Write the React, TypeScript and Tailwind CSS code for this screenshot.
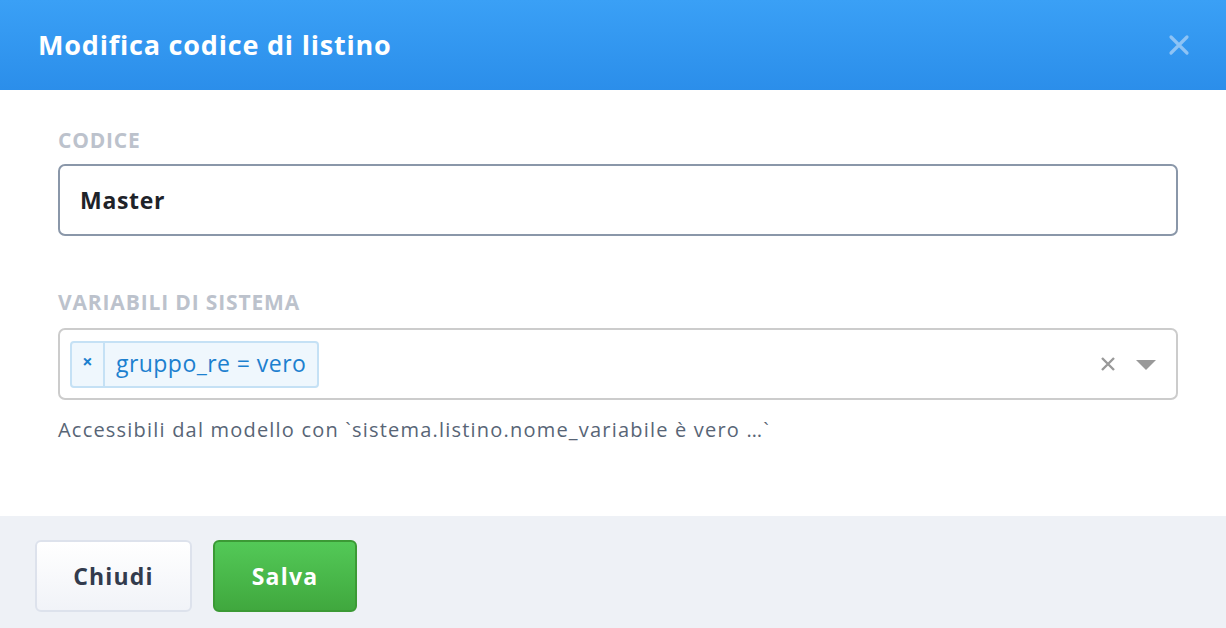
import React from "react";

export default function App() {
  return (
    <div className="w-[1226px] h-[628px] flex flex-col bg-white overflow-hidden" style={{ fontFamily: "'Open Sans', Lato, sans-serif" }}>
      <div className="h-[90px] shrink-0 flex items-center justify-between pl-[38px] pr-[36px] bg-gradient-to-b from-[#3aa0f6] to-[#2b8eea]">
        <h1 className="text-[27px] font-bold text-white tracking-[0.8px]">Modifica codice di listino</h1>
        <svg width="22" height="22" viewBox="0 0 22 22" className="text-[#8dc3f5]">
          <path d="M3 3 L19 19 M19 3 L3 19" stroke="currentColor" strokeWidth="3.2" strokeLinecap="round" />
        </svg>
      </div>
      <div className="flex-1 pl-[58px] pr-[48px] pt-[40px] flex flex-col">
        <label className="text-[21px] font-bold text-[#bcc2cc] uppercase leading-none h-[23px] tracking-[0.8px]">Codice</label>
        <div className="mt-[11px] h-[72px] border-2 border-[#8a97a9] rounded-[7px] flex items-center px-[20px]">
          <span className="text-[23px] font-bold text-[#1e2329] tracking-[0.7px]">Master</span>
        </div>
        <label className="mt-[56px] text-[21px] font-bold text-[#bcc2cc] uppercase leading-none h-[23px] tracking-[0.85px]">Variabili di sistema</label>
        <div className="mt-[13px] h-[72px] border-2 border-[#cccccc] rounded-[7px] flex items-center pl-[10px] pr-[20px]">
          <div className="h-[47px] flex items-stretch bg-[#eff7fd] border-2 border-[#c5e1f5] rounded-[4px] text-[#1c80cf]">
            <div className="w-[33px] flex items-center justify-center border-r-2 border-[#c5e1f5] text-[18px] font-bold leading-none pb-[6px]">×</div>
            <div className="flex items-center px-[11px] text-[23px] pb-[2px] tracking-[0.45px]">gruppo_re = vero</div>
          </div>
          <div className="flex-1" />
          <svg width="16" height="16" viewBox="0 0 16 16" className="text-[#999999] mr-[20px]">
            <path d="M2 2 L14 14 M14 2 L2 14" stroke="currentColor" strokeWidth="2.4" />
          </svg>
          <svg width="20" height="12" viewBox="0 0 20 12" className="text-[#999999]">
            <path d="M0 2 L20 2 L10 12 Z" fill="currentColor" />
          </svg>
        </div>
        <p className="mt-[15px] text-[20px] text-[#586576] tracking-[1.2px]">Accessibili dal modello con `sistema.listino.nome_variabile è vero …`</p>
      </div>
      <div className="h-[112px] shrink-0 bg-[#eef1f6] flex items-start pt-[24px] pl-[35px] gap-[21px]">
        <button className="w-[157px] h-[72px] rounded-[6px] border-2 border-[#dde2ec] bg-gradient-to-b from-white to-[#f1f3f8] text-[23px] font-bold text-[#323b4d] tracking-[1.2px]">Chiudi</button>
        <button className="w-[144px] h-[72px] rounded-[6px] border-2 border-[#3b9a35] bg-gradient-to-b from-[#53c957] to-[#40a83e] text-[23px] font-bold text-white tracking-[1.2px]">Salva</button>
      </div>
    </div>
  );
}
